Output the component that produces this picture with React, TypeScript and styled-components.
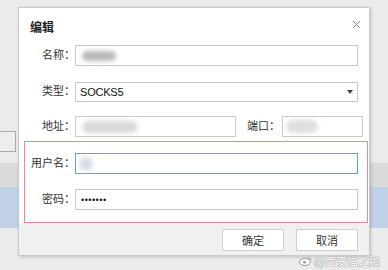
import * as React from 'react';
import styled, { createGlobalStyle } from 'styled-components';

const GlobalStyle = createGlobalStyle`
  html, body {
    margin: 0;
    padding: 0;
    background: #ebebeb;
    font-family: "Liberation Sans", "Noto Sans CJK SC", sans-serif;
  }
`;

const Page = styled.div`
  position: relative;
  width: 388px;
  height: 270px;
  overflow: hidden;
  display: flex;
  flex-direction: column;
`;

const Toolbar = styled.div`
  height: 131px;
`;

const ToolButton = styled.div`
  width: 16px;
  height: 21px;
  box-sizing: border-box;
  border: 1px solid #a9a9a9;
  border-left: none;
  background: #ededed;
`;

const TableHead = styled.div`
  margin-top: 11px;
  height: 24px;
  background: #dadada;
`;

const SelectedRow = styled.div`
  height: 41px;
  background: #c0d0e6;
`;

const Dialog = styled.div`
  position: absolute;
  left: 18px;
  top: 7px;
  width: 352px;
  height: 249px;
  box-sizing: border-box;
  border: 1px solid #c9c9c9;
  background: #f0f0f0;
  box-shadow: 1px 1px 3px rgba(0, 0, 0, 0.18);
  display: flex;
  flex-direction: column;
`;

const Header = styled.div`
  height: 31px;
  padding: 2px 8px 0 11px;
  box-sizing: border-box;
  display: flex;
  align-items: center;
  justify-content: space-between;
  background: #fff;
`;

const Title = styled.span`
  font-size: 12px;
  font-weight: bold;
  color: #222;
  margin-top: 3px;
`;

const Body = styled.div`
  background: #fff;
  padding: 6px 0 1px 0;
`;

const Row = styled.div<{ $labelWidth: number; $top: number; $right: number }>`
  display: flex;
  align-items: center;
  margin-top: ${p => p.$top}px;
  padding-right: ${p => p.$right}px;

  > label {
    width: ${p => p.$labelWidth}px;
  }
`;

const Label = styled.label`
  flex: none;
  text-align: right;
  font-size: 11px;
  color: #333;
  line-height: 21px;
  white-space: nowrap;
`;

const PortLabel = styled(Label)`
  width: auto !important;
  margin: 0 2px 0 11px;
`;

const Field = styled.div<{ $width?: number; $height?: number }>`
  ${p => (p.$width ? `width: ${p.$width}px; flex: none;` : 'flex: 1;')}
  height: ${p => p.$height ?? 21}px;
  box-sizing: border-box;
  border: 1px solid #cacaca;
  background: #fff;
  display: flex;
  align-items: center;
  padding: 0 4px;
  font-size: 11px;
  color: #111;
`;

const FocusedField = styled(Field)`
  border-color: #4da3f7;
`;

const Blur = styled.span<{ $w: number; $h: number; $color: string; $offset?: number }>`
  display: inline-block;
  width: ${p => p.$w}px;
  height: ${p => p.$h}px;
  margin-left: ${p => p.$offset ?? 2}px;
  border-radius: ${p => p.$h / 2}px;
  background: ${p => p.$color};
  filter: blur(2px);
`;

const SelectValue = styled.span`
  flex: 1;
  letter-spacing: -0.2px;
`;

const Dots = styled.span`
  font-size: 9px;
  letter-spacing: 0.5px;
  margin-left: 1px;
`;

const Group = styled.div`
  margin: 4px 1px 0 5px;
  border: 1px solid #f3878f;
  padding: 11px 0 12px 0;
`;

const Footer = styled.div`
  flex: 1;
  display: flex;
  justify-content: flex-end;
  gap: 12px;
  padding: 5px 11px 0 0;
`;

const Button = styled.button`
  width: 62px;
  height: 22px;
  box-sizing: border-box;
  border: 1px solid #d0d0d0;
  background: #fff;
  font-family: inherit;
  font-size: 11px;
  color: #333;
  padding: 0;
`;

const Watermark = styled.div`
  position: absolute;
  right: 8px;
  bottom: 1px;
  display: flex;
  align-items: center;
  gap: 2px;
  font-size: 11px;
  color: #fff;
  text-shadow: 0 0 1px #888, 0 0 1px #888;
`;

const CloseIcon = () => (
  <svg width="9" height="9" viewBox="0 0 9 9">
    <path d="M1 1 L8 8 M8 1 L1 8" stroke="#8a8a8a" strokeWidth="1" />
  </svg>
);

const Caret = () => (
  <svg width="6" height="4" viewBox="0 0 6 4">
    <path d="M0 0 H6 L3 4 Z" fill="#444" />
  </svg>
);

const WeiboMark = () => (
  <svg width="13" height="10" viewBox="0 0 13 10">
    <ellipse cx="6" cy="6" rx="5.5" ry="3.5" fill="#fff" stroke="#999" />
    <circle cx="5.5" cy="6.3" r="1.4" fill="#999" />
    <path d="M9 1.5 A3 3 0 0 1 12 4" stroke="#999" fill="none" />
  </svg>
);

export default function App() {
  return (
    <Page>
      <GlobalStyle />
      <Toolbar />
      <ToolButton />
      <TableHead />
      <SelectedRow />
      <Dialog>
        <Header>
          <Title>编辑</Title>
          <CloseIcon />
        </Header>
        <Body>
          <Row $labelWidth={56} $top={0} $right={11}>
            <Label>名称：</Label>
            <Field>
              <Blur $w={34} $h={10} $color="#b9b9b9" />
            </Field>
          </Row>
          <Row $labelWidth={56} $top={15} $right={11}>
            <Label>类型：</Label>
            <Field $height={20}>
              <SelectValue>SOCKS5</SelectValue>
              <Caret />
            </Field>
          </Row>
          <Row $labelWidth={56} $top={14} $right={11}>
            <Label>地址：</Label>
            <Field $width={161}>
              <Blur $w={56} $h={12} $color="#dadada" />
            </Field>
            <PortLabel>端口：</PortLabel>
            <Field $width={81}>
              <Blur $w={32} $h={13} $color="#dedede" $offset={-1} />
            </Field>
          </Row>
          <Group>
            <Row $labelWidth={50} $top={0} $right={9}>
              <Label>用户名：</Label>
              <FocusedField>
                <Blur $w={14} $h={14} $color="#d7dde6" $offset={-1} />
              </FocusedField>
            </Row>
            <Row $labelWidth={50} $top={15} $right={9}>
              <Label>密码：</Label>
              <Field>
                <Dots>•••••••</Dots>
              </Field>
            </Row>
          </Group>
        </Body>
        <Footer>
          <Button>确定</Button>
          <Button>取消</Button>
        </Footer>
      </Dialog>
      <Watermark>
        <WeiboMark />
        <span>@西安猫之鹏</span>
      </Watermark>
    </Page>
  );
}
